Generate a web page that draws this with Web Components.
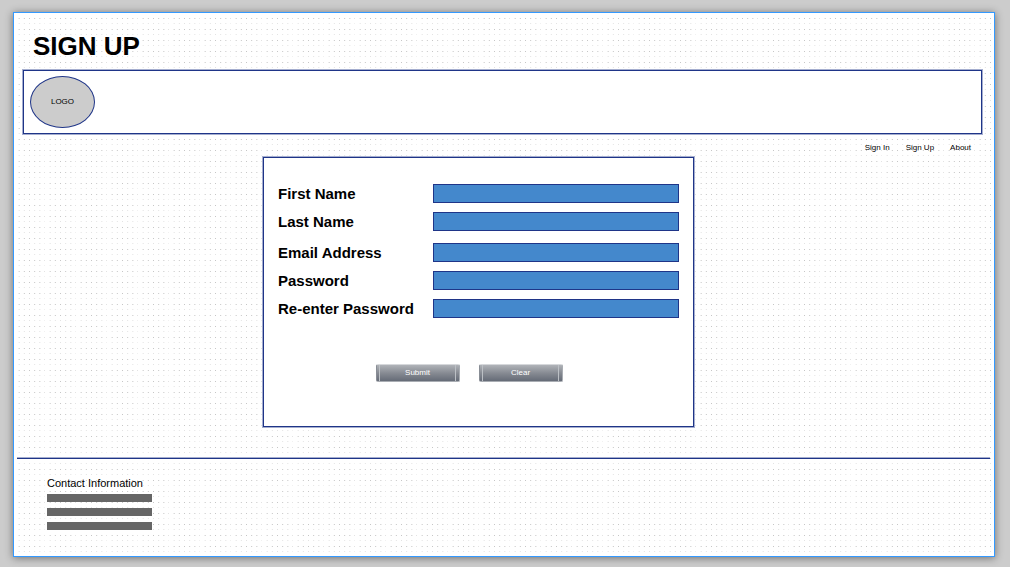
<!DOCTYPE html>
<html lang="en">
<head>
<meta charset="utf-8">
<meta name="viewport" content="width=device-width, initial-scale=1">
<title>Sign Up</title>
<style>
  :root { --ink: #000; --line: #1f3588; --soft: rgba(31, 53, 136, .4); --field: #4488cc; }
  * { box-sizing: border-box; }
  body { margin: 0; background: #ccc; color: var(--ink); font-family: "Liberation Sans", Arial, sans-serif; }
</style>
</head>
<body>
<design-sheet>
  <page-title>SIGN UP</page-title>
  <site-header>LOGO</site-header>
  <site-nav>
    <nav-link href="#sign-in">Sign In</nav-link>
    <nav-link href="#sign-up">Sign Up</nav-link>
    <nav-link href="#about">About</nav-link>
  </site-nav>
  <sign-up-panel>
    <field-group>
      <form-field label="First Name" name="first-name" type="text"></form-field>
      <form-field label="Last Name" name="last-name" type="text"></form-field>
    </field-group>
    <field-group>
      <form-field label="Email Address" name="email" type="email"></form-field>
      <form-field label="Password" name="password" type="password"></form-field>
      <form-field label="Re-enter Password" name="password-again" type="password"></form-field>
    </field-group>
    <push-button slot="actions" type="submit">Submit</push-button>
    <push-button slot="actions" type="reset">Clear</push-button>
  </sign-up-panel>
  <site-footer>Contact Information</site-footer>
</design-sheet>

<script>
const reset = '*, ::before, ::after { box-sizing: border-box; }';

function define(name, css, html) {
  customElements.define(name, class extends HTMLElement {
    constructor() {
      super();
      this.attachShadow({ mode: 'open' });
    }
    connectedCallback() {
      const template = document.createElement('template');
      const markup = typeof html === 'function' ? html(this) : html;
      template.innerHTML = `<style>${reset}${css}</style>${markup}`;
      this.shadowRoot.replaceChildren(template.content.cloneNode(true));
    }
  });
}

/* Grid dots: six columns in 31 units and two rows in 11 units. */
const dots = [0, 1].map(row => [0, 1, 2, 3, 4, 5].map(col =>
  `<rect x="${(15 + col * 31 / 6) % 31}" y="${5 + row * 5.5}" width="1" height="1"/>`).join('')).join('');

define('design-sheet', `
  :host { display: flex; min-height: 100vh; padding: 12px 15px 10px 13px; box-sizing: border-box; }
  .sheet { position: relative; flex: 1; display: flex; flex-direction: column; background: #fff;
    border: 1px solid #3399ff; box-shadow: 0 1px 8px rgba(0, 0, 0, .45); }
  .grid { position: absolute; inset: 0; width: 100%; height: 100%; }
  .content { position: relative; flex: 1; display: flex; flex-direction: column; }
`, `
  <div class="sheet">
    <svg class="grid" aria-hidden="true">
      <defs><pattern id="dots" width="31" height="11" patternUnits="userSpaceOnUse"><g fill="#c6c6c6">${dots}</g></pattern></defs>
      <rect width="100%" height="100%" fill="url(#dots)"/>
    </svg>
    <div class="content"><slot></slot></div>
  </div>
`);

define('page-title', `
  :host { display: block; padding: 18px 19px 9px; }
  h1 { margin: 0; font-size: 26px; line-height: 30px; font-weight: bold; }
`, '<h1><slot></slot></h1>');

define('site-header', `
  :host { display: block; margin: 0 12px 0 9px; }
  header { display: flex; align-items: center; height: 64px; padding: 0 6px; background: #fff;
    border: 1px solid var(--line); box-shadow: 0 0 0 1px var(--soft); }
  .logo { display: flex; align-items: center; justify-content: center; width: 65px; height: 52px;
    border: 1px solid var(--line); border-radius: 50%; background: #ccc; font-size: 8px; line-height: 10px; }
`, '<header><div class="logo"><slot></slot></div></header>');

define('site-nav', `
  :host { display: block; padding: 9px 23px 0; }
  nav { display: flex; justify-content: flex-end; gap: 16px; }
`, '<nav aria-label="Main"><slot></slot></nav>');

define('nav-link', `
  :host { display: block; font-size: 8px; line-height: 10px; }
  a { display: block; color: inherit; text-decoration: none; }
`, el => `<a href="${el.getAttribute('href')}"><slot></slot></a>`);

define('sign-up-panel', `
  :host { display: flex; justify-content: center; padding: 4px 51px 0 0; }
  form { display: flex; flex-direction: column; gap: 12px; width: 431px; min-height: 270px; background: #fff;
    padding: 26px 14px; border: 1px solid var(--line); box-shadow: 0 0 0 1px var(--soft); }
  .actions { display: flex; justify-content: center; gap: 19px; padding: 34px 19px 0 0; }
`, `
  <form onsubmit="return false">
    <slot></slot>
    <div class="actions"><slot name="actions"></slot></div>
  </form>
`);

define('field-group', ':host { display: flex; flex-direction: column; gap: 9px; }', '<slot></slot>');

define('form-field', `
  :host { display: grid; grid-template-columns: 155px 1fr; align-items: center; }
  label { font-size: 15px; line-height: 19px; font-weight: bold; white-space: nowrap; }
  input { width: 100%; height: 19px; margin: 0; padding: 0 4px; border: 1px solid var(--line); border-radius: 0;
    background: var(--field); color: #fff; font: inherit; font-size: 11px; }
`, el => `
  <label for="control">${el.getAttribute('label')}</label>
  <input id="control" name="${el.getAttribute('name')}" type="${el.getAttribute('type')}">
`);

define('push-button', `
  :host { display: block; }
  button { position: relative; display: block; width: 84px; height: 18px; margin: 0; padding: 0; border: 1px solid;
    border-color: #d6d8db #a9adb3 #a9adb3 #888d95; border-radius: 2px; color: #fff; font: inherit; font-size: 8px; line-height: 16px;
    background: linear-gradient(#b0b3b8, #878b93 50%, #656b77); }
  button::before { content: ""; position: absolute; inset: 0 3px 0 2px; border: solid #bcc0c5; border-width: 0 1px; }
`, el => `<button type="${el.getAttribute('type')}"><slot></slot></button>`);

define('site-footer', `
  :host { display: block; margin-top: 31px; padding: 0 4px 0 3px; }
  footer { padding: 18px 30px 26px; border-top: 1px solid var(--line); box-shadow: 0 -1px var(--soft); }
  h2 { margin: 0 0 5px; font-size: 11px; line-height: 12px; font-weight: normal; }
  .lines { display: grid; gap: 6px; width: 105px; }
  .lines span { height: 8px; background: #666; }
`, `
  <footer>
    <h2><slot></slot></h2>
    <div class="lines" aria-hidden="true"><span></span><span></span><span></span></div>
  </footer>
`);
</script>
</body>
</html>
